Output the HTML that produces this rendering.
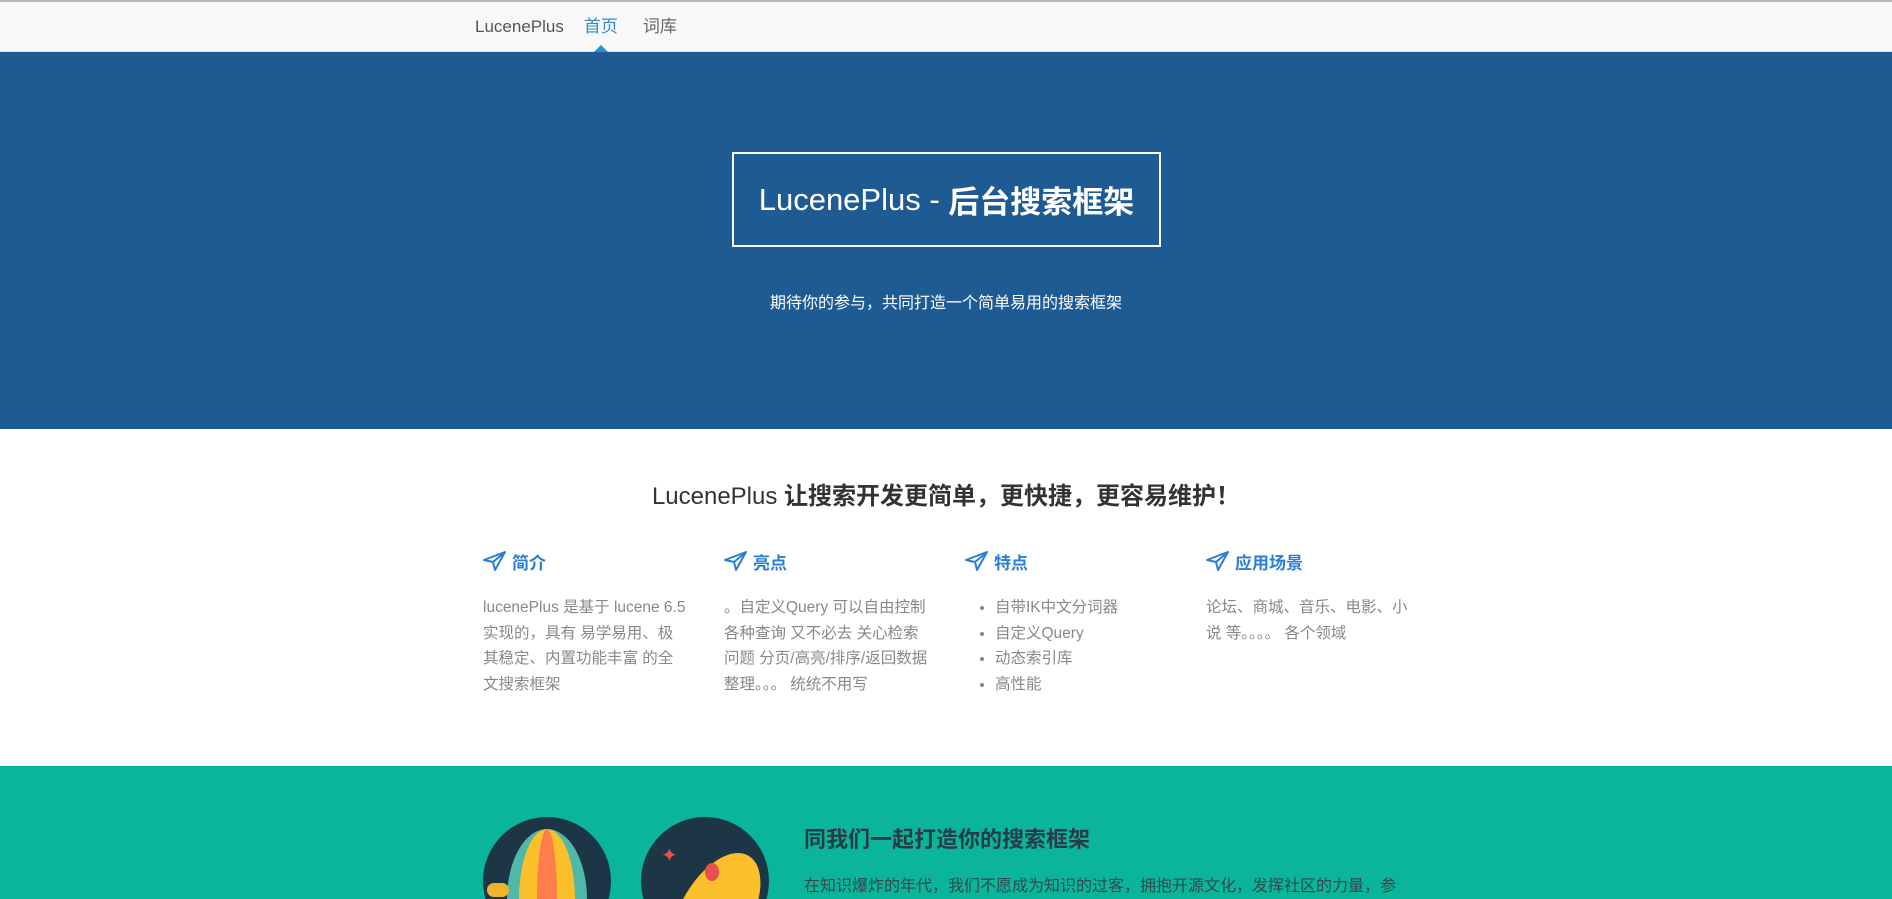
<!DOCTYPE html>
<html><head><meta charset="utf-8"><style>
*{margin:0;padding:0;box-sizing:border-box}
html,body{width:1892px;height:899px;overflow:hidden}
body{font-family:"Liberation Sans","Noto Sans CJK SC",sans-serif;background:#fff;color:#333;position:relative}
.nav{height:52px;background:#f8f8f8;border-top:2px solid #b8b8b8;border-bottom:1px solid #e4e4e4;position:relative}
.nav .in{position:absolute;left:475px;top:0;height:50px;display:flex;align-items:center;font-size:17px;line-height:20px}
.brand{color:#555;margin-right:20px;font-size:17px}
.act{color:#2a8fd0;position:relative;margin-right:25px}
.act:after{content:"";position:absolute;left:50%;margin-left:-7px;bottom:-15px;border:7px solid transparent;border-bottom-color:#2a8fd0;border-top:0}
.lnk{color:#666}
.hero{position:absolute;top:52px;left:0;width:1892px;height:377px;background:#1f5b93;color:#fff}
.box{position:absolute;left:732px;top:100px;width:429px;height:95px;border:2px solid #fff;display:flex;align-items:center;justify-content:center;font-size:31px;font-weight:bold}
.box span{font-weight:normal}
.sub{position:absolute;top:237px;width:100%;text-align:center;font-size:16px}
.feat{position:absolute;top:429px;left:0;width:1892px;height:337px}
.feat h2{position:absolute;top:47px;width:100%;text-align:center;font-size:24px;color:#333}
.col{position:absolute;top:120px;width:204px;font-size:15.5px}
.col h3{color:#2a7fd4;font-size:17px;display:flex;align-items:center;gap:5px;height:24px}
.col p,.col ul{margin-top:22px;color:#888;line-height:25.5px}
.col ul{margin-left:30px}
.teal{position:absolute;top:766px;left:0;width:1892px;height:133px;background:#0bb59b;overflow:hidden}
.c{position:absolute;top:51px;width:128px;height:128px;border-radius:50%;background:#1c3646;overflow:hidden}
.teal h4{position:absolute;left:804px;top:56px;font-size:22px;color:#263c47}
.teal p{position:absolute;left:804px;top:106px;font-size:16px;color:#2f4a4f;white-space:nowrap}
</style></head><body>
<div class="nav"><div class="in"><span class="brand">LucenePlus</span><span class="act">首页</span><span class="lnk">词库</span></div></div>
<div class="hero"><div class="box"><span>LucenePlus -&nbsp;</span>后台搜索框架</div><div class="sub">期待你的参与，共同打造一个简单易用的搜索框架</div></div>
<div class="feat"><h2><span style="font-weight:normal">LucenePlus</span> 让搜索开发更简单，更快捷，更容易维护！</h2>
<div class="col" style="left:483px"><h3><svg width="24" height="22" viewBox="0 0 24 22"><path d="M1 10 L22 2 L12 20 L10 12 Z M10 12 L22 2" fill="none" stroke="#2a7fd4" stroke-width="2" stroke-linejoin="round"/></svg>简介</h3><p>lucenePlus 是基于 lucene 6.5 实现的，具有 易学易用、极其稳定、内置功能丰富 的全文搜索框架</p></div>
<div class="col" style="left:724px"><h3><svg width="24" height="22" viewBox="0 0 24 22"><path d="M1 10 L22 2 L12 20 L10 12 Z M10 12 L22 2" fill="none" stroke="#2a7fd4" stroke-width="2" stroke-linejoin="round"/></svg>亮点</h3><p>。自定义Query 可以自由控制各种查询 又不必去 关心检索问题 分页/高亮/排序/返回数据整理。。。 统统不用写</p></div>
<div class="col" style="left:965px"><h3><svg width="24" height="22" viewBox="0 0 24 22"><path d="M1 10 L22 2 L12 20 L10 12 Z M10 12 L22 2" fill="none" stroke="#2a7fd4" stroke-width="2" stroke-linejoin="round"/></svg>特点</h3><ul><li>自带IK中文分词器</li><li>自定义Query</li><li>动态索引库</li><li>高性能</li></ul></div>
<div class="col" style="left:1206px"><h3><svg width="24" height="22" viewBox="0 0 24 22"><path d="M1 10 L22 2 L12 20 L10 12 Z M10 12 L22 2" fill="none" stroke="#2a7fd4" stroke-width="2" stroke-linejoin="round"/></svg>应用场景</h3><p>论坛、商城、音乐、电影、小说 等。。。。 各个领域</p></div>
</div>
<div class="teal">
<div class="c" style="left:483px"><div style="position:absolute;left:24px;top:12px;width:80px;height:140px;border-radius:50%;background:#4fb8a8"></div><div style="position:absolute;left:36px;top:12px;width:56px;height:140px;border-radius:50%;background:#fbbf2c"></div><div style="position:absolute;left:54px;top:12px;width:20px;height:140px;border-radius:50%;background:#fe7d4c"></div><div style="position:absolute;left:4px;top:66px;width:22px;height:14px;border-radius:7px;background:#f0b42a"></div></div>
<div class="c" style="left:641px"><div style="position:absolute;left:40px;top:30px;width:70px;height:130px;border-radius:50% 50% 0 0;background:#fbbf2c;transform:rotate(30deg)"></div><div style="position:absolute;left:64px;top:46px;width:14px;height:18px;border-radius:50%;background:#e94e4e"></div><div style="position:absolute;left:20px;top:26px;color:#e94e4e;font-size:20px">✦</div></div>
<h4>同我们一起打造你的搜索框架</h4>
<p>在知识爆炸的年代，我们不愿成为知识的过客，拥抱开源文化，发挥社区的力量，参</p>
</div>
</body></html>
